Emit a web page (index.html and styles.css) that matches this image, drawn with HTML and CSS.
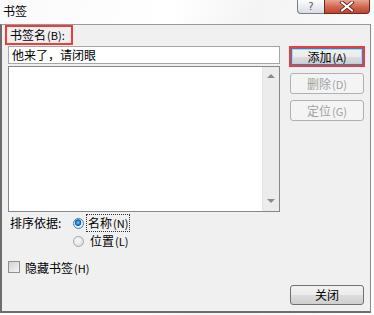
FILE: index.html
```html
<!DOCTYPE html>
<html lang="zh">
<head>
  <meta charset="UTF-8">
  <title>书签</title>
  <link rel="stylesheet" href="styles.css">
</head>
<body>
  <div class="window">
    <div class="titlebar">
      <span class="title">书签</span>
      <div class="caption">
        <span class="cap-help">?</span>
        <span class="cap-close">
          <svg width="16" height="11" viewBox="0 0 16 11">
            <path d="M3 1.5 L13 9.5 M13 1.5 L3 9.5" stroke="#5a1a10" stroke-width="3.6" stroke-linecap="square"/>
            <path d="M3 1.5 L13 9.5 M13 1.5 L3 9.5" stroke="#fff" stroke-width="2" stroke-linecap="square"/>
          </svg>
        </span>
      </div>
    </div>
    <div class="dialog">
      <div class="main">
        <div class="left">
          <div class="field-label">书签名<span class="key">(B):</span></div>
          <div class="name-input">他来了，请闭眼</div>
          <div class="listbox">
            <div class="items"></div>
            <div class="scrollbar">
              <span class="arrow-up"></span>
              <span class="arrow-down"></span>
            </div>
          </div>
          <div class="sort">
            <span class="sort-label">排序依据:</span>
            <div class="radios">
              <div class="radio-row">
                <span class="radio checked"></span>
                <span class="focus">名称<span class="key">(N)</span></span>
              </div>
              <div class="radio-row">
                <span class="radio"></span>
                <span class="opt">位置<span class="key">(L)</span></span>
              </div>
            </div>
          </div>
          <div class="check-row">
            <span class="checkbox"></span>
            <span>隐藏书签<span class="key">(H)</span></span>
          </div>
        </div>
        <div class="right">
          <div class="default-wrap"><button class="btn default">添加<span class="key">(A)</span></button></div>
          <button class="btn disabled">删除<span class="key">(D)</span></button>
          <button class="btn disabled">定位<span class="key">(G)</span></button>
        </div>
      </div>
      <div class="footer">
        <button class="btn">关闭</button>
      </div>
    </div>
  </div>
</body>
</html>
```

FILE: styles.css
```css
body{
  margin: 0;
  font-family: "Noto Sans CJK SC", "Liberation Sans", sans-serif;
  font-size: 12px;
  color: #000;
  background: #fff;
}
.key{
  font-size: 11px;
  margin-left: 1px;
}
.window{
  width: 374px;
  height: 315px;
  background: linear-gradient(100deg, #fafafa 0%, #ffffff 40%, #f4f4f4 60%, #fdfdfd 100%);
}
.titlebar{
  height: 24px;
  display: flex;
  justify-content: space-between;
  align-items: flex-start;
}
.title{
  margin: 3px 0 0 3px;
  line-height: 16px;
}
.caption{
  display: flex;
  margin-right: 4px;
}
.cap-help{
  width: 27px;
  height: 14px;
  box-sizing: border-box;
  border: 1px solid #7a7f86;
  border-top: none;
  border-right: none;
  border-radius: 0 0 0 4px;
  background: linear-gradient(#fdfdfd, #d8dde4);
  color: #555;
  font-family: "DejaVu Sans", sans-serif;
  font-size: 10px;
  line-height: 13px;
  text-align: center;
}
.cap-close{
  width: 46px;
  height: 14px;
  box-sizing: border-box;
  border: 1px solid #6b2a20;
  border-top: none;
  border-radius: 0 0 4px 0;
  background: linear-gradient(#e9a593, #d16a52 50%, #c0442d);
  display: flex;
  align-items: center;
  justify-content: center;
}
.dialog{
  width: 371px;
  height: 289px;
  box-sizing: border-box;
  border-top: 1px solid #9a9a9a;
  border-left: 2px solid #6d6d6d;
  border-right: 1px solid #8a8a8a;
  border-bottom: 2px solid #6d6d6d;
  background: #f0f0f0;
  display: flex;
  flex-direction: column;
}
.main{
  display: flex;
}
.left{
  width: 272px;
  margin-left: 6px;
}
.field-label{
  width: 68px;
  height: 20px;
  box-sizing: border-box;
  margin-left: -3px;
  border: 2px solid #ef3b3b;
  padding-left: 3px;
  line-height: 15px;
  white-space: nowrap;
  overflow: hidden;
}
.name-input{
  margin-top: 1px;
  height: 18px;
  box-sizing: border-box;
  border: 1px solid #a6a6a6;
  background: #fff;
  padding-left: 3px;
  line-height: 15px;
}
.listbox{
  margin-top: 2px;
  height: 146px;
  box-sizing: border-box;
  border: 1px solid #828790;
  background: #fff;
  display: flex;
  justify-content: flex-end;
}
.scrollbar{
  width: 17px;
  box-sizing: border-box;
  border-left: 1px solid #e4e4e4;
  background: #ececec;
  display: flex;
  flex-direction: column;
  justify-content: space-between;
  align-items: center;
  padding: 7px 0 8px;
}
.arrow-up,
.arrow-down{
  width: 0;
  height: 0;
  border-left: 4px solid transparent;
  border-right: 4px solid transparent;
}
.arrow-up{
  border-bottom: 4px solid #8c8c8c;
}
.arrow-down{
  border-top: 4px solid #8c8c8c;
}
.sort{
  display: flex;
  margin-top: 3px;
  margin-left: 2px;
}
.sort-label{
  line-height: 16px;
  width: 63px;
}
.radios{
  display: flex;
  flex-direction: column;
  gap: 2px;
}
.radio-row{
  display: flex;
  align-items: center;
  height: 16px;
}
.radio{
  width: 11px;
  height: 11px;
  box-sizing: border-box;
  border-radius: 50%;
  border: 1px solid #a0a4a8;
  background: radial-gradient(circle at 40% 35%, #fafafa, #d8d8d8);
  margin-right: 3px;
}
.radio.checked{
  border-color: #3c7fb1;
  background: radial-gradient(circle at 45% 40%, #8fd2ff 0, #1a7ccc 2px, #0a5aa0 3px, #e8f2fa 3.6px, #cfe3f2 100%);
}
.focus{
  outline: 1px dotted #333;
  line-height: 15px;
  padding: 0 1px;
}
.opt{
  line-height: 16px;
  padding-left: 3px;
}
.check-row{
  display: flex;
  align-items: center;
  margin-top: 11px;
  height: 14px;
}
.checkbox{
  width: 12px;
  height: 12px;
  box-sizing: border-box;
  border: 1px solid #8f8f8f;
  background: linear-gradient(135deg, #d2d2d2, #f4f4f4);
  margin-right: 5px;
}
.right{
  width: 74px;
  margin-left: 10px;
  margin-top: 21px;
  display: flex;
  flex-direction: column;
  gap: 6px;
}
.default-wrap{
  margin: 0 -1px;
  height: 21px;
  box-sizing: border-box;
  border: 2px solid #ef3b3b;
  display: flex;
}
.btn{
  width: 74px;
  height: 20px;
  box-sizing: border-box;
  border: 1px solid #707070;
  border-radius: 3px;
  background: linear-gradient(#f2f2f2 0%, #ebebeb 50%, #dddddd 51%, #cfcfcf 100%);
  font-family: inherit;
  font-size: 12px;
  line-height: 16px;
  padding: 0;
  color: #000;
}
.btn.default{
  flex: 1;
  height: 17px;
  border: 1px solid #3c7fb1;
  border-radius: 0;
  box-shadow: inset 0 0 0 1px #a7d6f3;
  line-height: 14px;
}
.btn.disabled{
  border-color: #adb2b5;
  background: #f4f4f4;
  color: #a0a0a0;
  height: 21px;
}
.footer{
  margin-top: auto;
  display: flex;
  justify-content: flex-end;
  padding: 0 6px 6px 0;
}
```
